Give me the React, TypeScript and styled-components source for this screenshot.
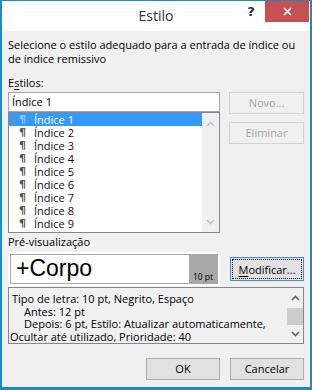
import { createGlobalStyle, styled } from 'styled-components';

const UI_FONT = `'Open Sans', 'Noto Sans', sans-serif`;

const styleNames = Array.from({ length: 9 }, (_, i) => `Índice ${i + 1}`);

function Chevron({ up, color }: { up?: boolean; color: string }) {
	return (
		<svg width='9' height='6' viewBox='0 0 9 6'>
			<polyline
				points={up ? '1,5 4.5,1.5 8,5' : '1,1 4.5,4.5 8,1'}
				fill='none'
				stroke={color}
				strokeWidth='1.6'
			/>
		</svg>
	);
}

export default function App() {
	return (
		<>
			<GlobalStyle />
			<Dialog>
				<TitleBar>
					<span />
					<Title>Estilo</Title>
					<Controls>
						<HelpButton>?</HelpButton>
						<CloseButton>
							<svg width='9' height='9' viewBox='0 0 9 9'>
								<path d='M1 1 L8 8 M8 1 L1 8' stroke='#fff' strokeWidth='1.6' />
							</svg>
						</CloseButton>
					</Controls>
				</TitleBar>

				<Body>
					<Intro>
						Selecione o estilo adequado para a entrada de índice ou
						<br />
						de índice remissivo
					</Intro>

					<Label>
						E<u>s</u>tilos:
					</Label>
					<StylesRow>
						<StylesColumn>
							<NameInput>Índice 1</NameInput>
							<ListBox>
								<Items>
									{styleNames.map((name, i) => (
										<Item key={name} $selected={i === 0}>
											<Arrow $visible={i === 0} />
											<Pilcrow $selected={i === 0}>¶</Pilcrow>
											{name}
										</Item>
									))}
								</Items>
								<ListScroll>
									<Chevron up color='#c2c2c2' />
									<Chevron color='#c2c2c2' />
								</ListScroll>
							</ListBox>
						</StylesColumn>
						<SideButtons>
							<Button disabled>Novo...</Button>
							<Button disabled>Eliminar</Button>
						</SideButtons>
					</StylesRow>

					<PreviewLabel>Pré-visualização</PreviewLabel>
					<PreviewRow>
						<PreviewFrame>
							<PreviewInner>
								<Sample>+Corpo</Sample>
								<SizeTag>10 pt</SizeTag>
							</PreviewInner>
						</PreviewFrame>
						<FocusButton>
							<FocusRing>
								<u>M</u>odificar...
							</FocusRing>
						</FocusButton>
					</PreviewRow>

					<Description>
						<DescText>
							<DescLine $indent={2}>Tipo de letra: 10 pt, Negrito, Espaço</DescLine>
							<DescLine $indent={14}>Antes: 12 pt</DescLine>
							<DescLine $indent={14}>Depois: 6 pt, Estilo: Atualizar automaticamente,</DescLine>
							<DescLine>Ocultar até utilizado, Prioridade: 40</DescLine>
						</DescText>
						<DescScroll>
							<ScrollCell $height={20}>
								<Chevron up color='#606060' />
							</ScrollCell>
							<Thumb />
							<ScrollCell $height={17} $grow>
								<Chevron color='#606060' />
							</ScrollCell>
						</DescScroll>
					</Description>

					<Footer>
						<Button>OK</Button>
						<Button>Cancelar</Button>
					</Footer>
				</Body>
			</Dialog>
		</>
	);
}

const GlobalStyle = createGlobalStyle`
	html, body {
		margin: 0;
		padding: 0;
		background: #f0f0f0;
	}
	body {
		font-family: ${UI_FONT};
		font-size: 11px;
		color: #000;
	}
`;

const Dialog = styled.div`
	box-sizing: border-box;
	width: 312px;
	height: 390px;
	display: flex;
	flex-direction: column;
	background: #f0f0f0;
	border: 2px solid #1f8ac0;
	border-top-width: 1px;
	border-bottom-width: 3px;
`;

const TitleBar = styled.div`
	display: grid;
	grid-template-columns: 1fr auto 1fr;
	height: 30px;
	background: #fff;
`;

const Title = styled.div`
	font-size: 14px;
	line-height: 30px;
	color: #333;
`;

const Controls = styled.div`
	display: flex;
	justify-content: flex-end;
	align-items: flex-start;
	padding-right: 1px;
`;

const HelpButton = styled.div`
	width: 28px;
	height: 21px;
	display: flex;
	align-items: center;
	justify-content: center;
	font-family: 'DejaVu Sans', sans-serif;
	font-weight: bold;
	font-size: 13px;
	color: #2b2b2b;
`;

const CloseButton = styled.div`
	width: 44px;
	height: 21px;
	display: flex;
	align-items: center;
	justify-content: center;
	background: #c75050;
`;

const Body = styled.div`
	display: flex;
	flex-direction: column;
	padding: 7px 6px 0;
`;

const Intro = styled.div`
	line-height: 13.5px;
`;

const Label = styled.div`
	margin: 10px 0 2px;
	line-height: 15px;

	u {
		text-decoration-thickness: 1px;
		text-underline-offset: 2px;
	}
`;

const PreviewLabel = styled(Label)`
	margin: 1px 0 3px;
`;

const StylesRow = styled.div`
	display: flex;
	gap: 9px;
`;

const StylesColumn = styled.div`
	width: 212px;
	display: flex;
	flex-direction: column;
`;

const NameInput = styled.div`
	box-sizing: border-box;
	height: 20px;
	padding: 0 3px;
	line-height: 18px;
	background: #fff;
	border: 1px solid #a5a5a5;
`;

const ListBox = styled.div`
	box-sizing: border-box;
	height: 121px;
	display: flex;
	background: #fff;
	border: 1px solid #828790;
`;

const Items = styled.div`
	flex: 1;
	display: flex;
	flex-direction: column;
`;

const Item = styled.div<{ $selected?: boolean }>`
	height: 13px;
	display: flex;
	align-items: center;
	padding-left: 3px;
	line-height: 13px;
	color: ${({ $selected }) => ($selected ? '#fff' : '#111')};
	background: ${({ $selected }) => ($selected ? '#3399ff' : 'transparent')};
`;

const Arrow = styled.span<{ $visible?: boolean }>`
	width: 0;
	height: 0;
	margin-right: 3px;
	border-left: 4px solid ${({ $visible }) => ($visible ? '#7e8a99' : 'transparent')};
	border-top: 3px solid transparent;
	border-bottom: 3px solid transparent;
`;

const Pilcrow = styled.span<{ $selected?: boolean }>`
	width: 8px;
	margin-right: 7px;
	font-family: 'DejaVu Sans', sans-serif;
	font-weight: bold;
	font-size: 11px;
	color: ${({ $selected }) => ($selected ? '#9fc4ea' : '#505050')};
`;

const ListScroll = styled.div`
	width: 17px;
	display: flex;
	flex-direction: column;
	justify-content: space-between;
	align-items: center;
	padding: 8px 0 7px;
	background: #f0f0f0;
`;

const SideButtons = styled.div`
	width: 75px;
	display: flex;
	flex-direction: column;
	gap: 8px;
`;

const Button = styled.button`
	box-sizing: border-box;
	width: 74px;
	height: 22px;
	padding: 0;
	font-family: ${UI_FONT};
	font-size: 11px;
	line-height: 20px;
	color: #000;
	background: #e1e1e1;
	border: 1px solid #adadad;

	${SideButtons} & {
		width: 75px;
	}

	&:disabled {
		color: #a3a3a3;
		background: #f0f0f0;
		border-color: #d3d3d3;
	}
`;

const PreviewRow = styled.div`
	display: flex;
	align-items: center;
	gap: 10px;
`;

const PreviewFrame = styled.div`
	box-sizing: border-box;
	width: 212px;
	height: 34px;
	padding: 2px;
	background: #fff;
`;

const PreviewInner = styled.div`
	height: 100%;
	box-sizing: border-box;
	display: flex;
	border: 1px solid #a9a9a9;
	background: #fff;
`;

const Sample = styled.div`
	flex: 1;
	padding-left: 5px;
	font-family: 'Liberation Sans', Arial, sans-serif;
	font-size: 23px;
	line-height: 27px;
`;

const SizeTag = styled.div`
	width: 28px;
	display: flex;
	align-items: flex-end;
	justify-content: center;
	padding-bottom: 1px;
	font-size: 8.5px;
	line-height: 11px;
	background: #a9a9a9;
`;

const FocusButton = styled.div`
	box-sizing: border-box;
	width: 74px;
	height: 24px;
	padding: 1px;
	background: #e1e1e1;
	border: 1px solid #3d8ee0;
`;

const FocusRing = styled.div`
	height: 100%;
	box-sizing: border-box;
	display: flex;
	align-items: center;
	justify-content: center;
	border: 1px dotted #000;

	u {
		text-decoration-thickness: 1px;
		text-underline-offset: 2px;
	}
`;

const Description = styled.div`
	box-sizing: border-box;
	height: 57px;
	margin-top: 1px;
	display: flex;
	background: #f0f0f0;
	border: 1px solid #828790;
`;

const DescText = styled.div`
	flex: 1;
	padding: 5px 0 0 1px;
	line-height: 12.5px;
	white-space: nowrap;
`;

const DescLine = styled.div<{ $indent?: number }>`
	padding-left: ${({ $indent }) => $indent ?? 0}px;
`;

const DescScroll = styled.div`
	width: 16px;
	display: flex;
	flex-direction: column;
`;

const ScrollCell = styled.div<{ $height: number; $grow?: boolean }>`
	height: ${({ $height }) => $height}px;
	flex-grow: ${({ $grow }) => ($grow ? 1 : 0)};
	display: flex;
	align-items: center;
	justify-content: center;
`;

const Thumb = styled.div`
	height: 17px;
	background: #cdcdcd;
`;

const Footer = styled.div`
	display: flex;
	justify-content: flex-end;
	gap: 10px;
	margin-top: 14px;
`;
